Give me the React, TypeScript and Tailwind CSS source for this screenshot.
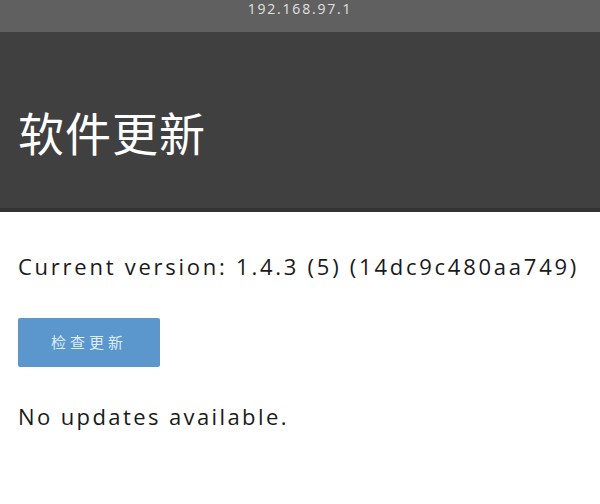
const App = () => {
  return (
    <div className="min-h-[504px] w-full bg-white font-['Open_Sans','Noto_Sans_CJK_SC',sans-serif]">
      {/* address bar */}
      <div className="flex h-8 items-start justify-center bg-[#606060] pt-[1px]">
        <span className="text-[14px] leading-4 tracking-[1.8px] text-[#e0e0e0]">192.168.97.1</span>
      </div>

      {/* page header */}
      <header className="flex h-[180px] items-center border-b-[4px] border-[#333333] bg-[#404040] px-[18px] pt-[22px]">
        <h1 className="font-['Noto_Sans_CJK_SC',sans-serif] text-[46px] font-normal leading-none tracking-[1px] text-white">
          软件更新
        </h1>
      </header>

      <main className="px-[18px] pt-[38px]">
        <p className="text-[22px] leading-8 tracking-[2.75px] text-[#1a1a1a]">
          Current version: 1.4.3 (5) (14dc9c480aa749)
        </p>
        <button className="mt-[36px] flex h-[49px] w-[142px] items-center justify-center rounded-[2px] bg-[#5b97cc] text-[15px] tracking-[4px] text-[#dcecfa]">
          检查更新
        </button>
        <p className="mt-[33px] text-[22px] leading-8 tracking-[2.4px] text-[#1a1a1a]">No updates available.</p>
      </main>
    </div>
  );
};

export default App;
